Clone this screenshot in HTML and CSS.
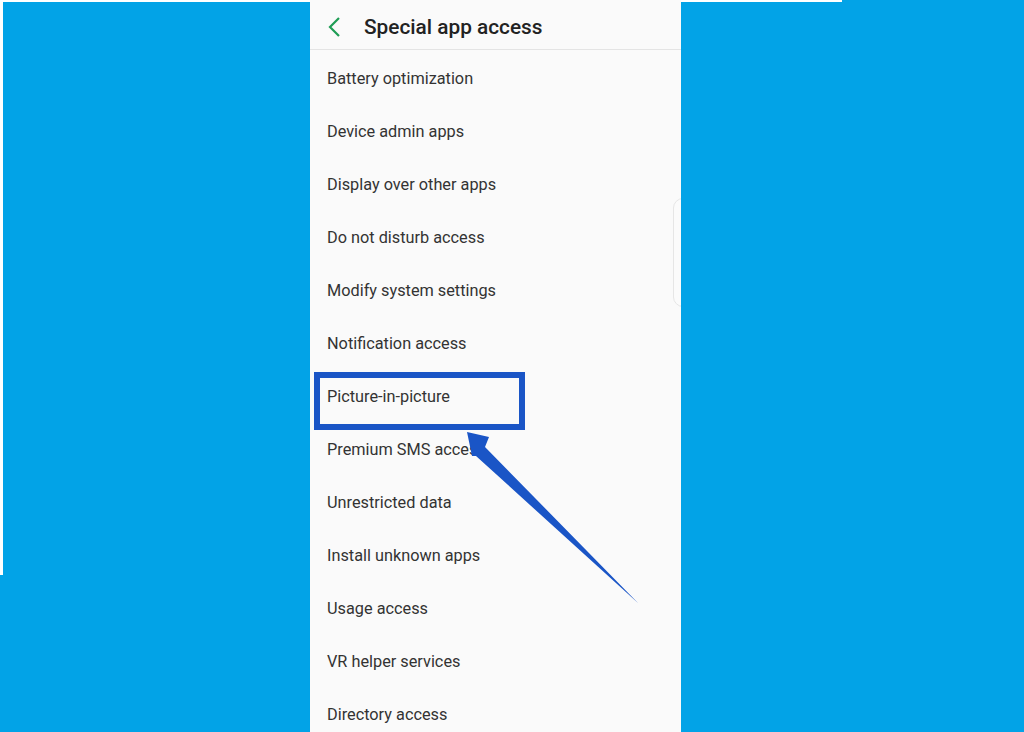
FILE: index.html
```html
<!DOCTYPE html>
<html lang="en">
<head>
    <meta charset="UTF-8">
    <meta name="viewport" content="width=device-width, initial-scale=1.0">
    <title>Special app access</title>
    <link rel="stylesheet" href="styles.css">
</head>
<body>
    <div class="screen">
        <!-- Header -->
        <div class="header">
            <svg class="back" width="16" height="22" viewBox="0 0 16 22">
                <polyline points="11,2 2,11 11,20" fill="none" stroke="#1f9d55" stroke-width="2.2" />
            </svg>
            <span class="title">Special app access</span>
        </div>

        <!-- List -->
        <ul class="list">
            <li>Battery optimization</li>
            <li>Device admin apps</li>
            <li>Display over other apps</li>
            <li>Do not disturb access</li>
            <li>Modify system settings</li>
            <li>Notification access</li>
            <li>Picture-in-picture</li>
            <li>Premium SMS access</li>
            <li>Unrestricted data</li>
            <li>Install unknown apps</li>
            <li>Usage access</li>
            <li>VR helper services</li>
            <li>Directory access</li>
        </ul>

        <!-- Side handle -->
        <div class="handle"></div>

        <!-- Highlight box -->
        <div class="highlight"></div>
    </div>

    <!-- Arrow -->
    <svg class="arrow" width="1024" height="732" viewBox="0 0 1024 732">
        <polygon points="467,432 489,437 485,447 638,603 476,456 472,456" fill="#1a55c6" />
    </svg>
</body>
</html>
```

FILE: styles.css
```css
/* Page */
body {
    margin: 0;
    height: 732px;
    overflow: hidden;
    font-family: Roboto, "Noto Sans", sans-serif;
    background:
        linear-gradient(#fff, #fff) 0 0 / 842px 2px no-repeat,
        linear-gradient(#fff, #fff) 0 0 / 3px 575px no-repeat,
        #02a3e7;
}

.screen {
    position: relative;
    margin-left: 310px;
    width: 371px;
    height: 732px;
    background-color: #fafafa;
    overflow: hidden;
}

/* Header */
.header {
    display: flex;
    align-items: center;
    height: 50px;
    padding-top: 4px;
    border-bottom: 1px solid #e4e4e4;
    padding-left: 18px;
    box-sizing: border-box;
}

.back {
    margin-right: 20px;
}

.title {
    font-size: 20.8px;
    font-weight: 500;
    color: #222;
}

/* List */
.list {
    list-style: none;
    margin: 0;
    padding: 2px 0 0;
}

.list li {
    height: 53px;
    line-height: 53px;
    padding-left: 17px;
    font-size: 16.3px;
    color: #333;
}

/* Right edge handle */
.handle {
    position: absolute;
    left: 363px;
    top: 198px;
    width: 24px;
    height: 107px;
    border: 1px solid #e6e6e6;
    border-radius: 10px;
    background-color: #fbfbfb;
}

/* Annotation */
.highlight {
    position: absolute;
    left: 4px;
    top: 372px;
    width: 199px;
    height: 46px;
    border: 6px solid #1a55c6;
}

.arrow {
    position: absolute;
    left: 0;
    top: 0;
}
```
